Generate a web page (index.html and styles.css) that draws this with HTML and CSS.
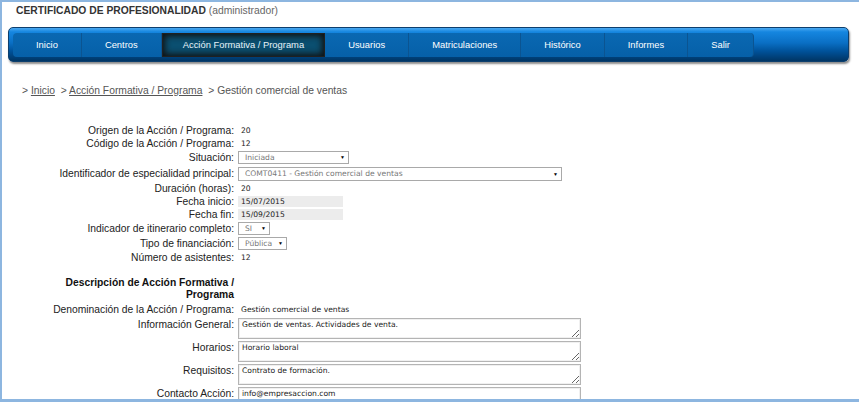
FILE: index.html
```html
<!DOCTYPE html>
<html lang="es">

<head>
  <meta charset="UTF-8" />
  <meta name="viewport" content="width=device-width, initial-scale=1.0" />
  <title>Certificado de profesionalidad</title>
  <link rel="stylesheet" href="styles.css">
</head>

<body>
  <div class="frame">
    <div class="header">
      <strong>CERTIFICADO DE PROFESIONALIDAD</strong> (administrador)
    </div>

    <div class="menu">
      <ul class="menu-items">
        <li><a href="javascript:;">Inicio</a></li>
        <li><a href="javascript:;">Centros</a></li>
        <li><a href="javascript:;" class="active">Acción Formativa / Programa</a></li>
        <li><a href="javascript:;">Usuarios</a></li>
        <li><a href="javascript:;">Matriculaciones</a></li>
        <li><a href="javascript:;">Histórico</a></li>
        <li><a href="javascript:;">Informes</a></li>
        <li><a href="javascript:;" class="last">Salir</a></li>
      </ul>
    </div>

    <div class="breadcrumb">
      &gt; <a href="javascript:;">Inicio</a> &gt; <a href="javascript:;">Acción Formativa / Programa</a> &gt; Gestión comercial de ventas
    </div>

    <form class="form">
      <div class="row">
        <label class="label">Origen de la Acción / Programa:</label>
        <span class="value">20</span>
      </div>
      <div class="row">
        <label class="label">Código de la Acción / Programa:</label>
        <span class="value">12</span>
      </div>
      <div class="row">
        <label class="label">Situación:</label>
        <span class="select select-md">
          <select><option>Iniciada</option></select>
        </span>
      </div>
      <div class="row">
        <label class="label">Identificador de especialidad principal:</label>
        <span class="select select-lg">
          <select><option>COMT0411 - Gestión comercial de ventas</option></select>
        </span>
      </div>
      <div class="row">
        <label class="label">Duración (horas):</label>
        <span class="value">20</span>
      </div>
      <div class="row">
        <label class="label">Fecha inicio:</label>
        <input class="date" type="text" value="15/07/2015" readonly>
      </div>
      <div class="row">
        <label class="label">Fecha fin:</label>
        <input class="date" type="text" value="15/09/2015" readonly>
      </div>
      <div class="row">
        <label class="label">Indicador de itinerario completo:</label>
        <span class="select select-xs">
          <select><option>SI</option></select>
        </span>
      </div>
      <div class="row">
        <label class="label">Tipo de financiación:</label>
        <span class="select select-sm">
          <select><option>Pública</option></select>
        </span>
      </div>
      <div class="row">
        <label class="label">Número de asistentes:</label>
        <span class="value">12</span>
      </div>

      <div class="section-title">Descripción de Acción Formativa / Programa</div>

      <div class="row">
        <label class="label">Denominación de la Acción / Programa:</label>
        <span class="value">Gestión comercial de ventas</span>
      </div>
      <div class="row row-top">
        <label class="label">Información General:</label>
        <textarea>Gestión de ventas. Actividades de venta.</textarea>
      </div>
      <div class="row row-top">
        <label class="label">Horarios:</label>
        <textarea>Horario laboral</textarea>
      </div>
      <div class="row row-top">
        <label class="label">Requisitos:</label>
        <textarea>Contrato de formación.</textarea>
      </div>
      <div class="row row-top">
        <label class="label">Contacto Acción:</label>
        <input class="text" type="text" value="info@empresaccion.com">
      </div>
    </form>
  </div>
</body>

</html>
```

FILE: styles.css
```css
* {
  padding: 0;
  margin: 0;
  box-sizing: border-box;
}

body {
  background: #fff;
  font-family: "Liberation Sans", Arial, sans-serif;
  color: #222;
}

.frame {
  height: 402px;
  overflow: hidden;
  border: 2px solid #8db6e0;
  border-right: 0;
  border-bottom-width: 3px;
}

.header {
  padding: 2px 0 0 14px;
  font-size: 10.3px;
  line-height: 13px;
  color: #666;
}

.header strong {
  color: #333;
}

/* menu */
.menu {
  margin: 10px 0 0 6px;
  width: 841px;
  height: 35px;
  padding: 5px 0 0 4px;
  border: 1px solid #0d3f6e;
  border-radius: 5px;
  background: linear-gradient(#4aa8f0, #1586e0 12%, #0a6fc4 45%, #00529a 70%, #003564);
  box-shadow: 1px 2px 2px rgba(0, 0, 0, 0.45);
}

.menu-items {
  display: flex;
  list-style: none;
  height: 24px;
}

.menu-items a {
  display: block;
  height: 24px;
  line-height: 24px;
  padding: 0 23px;
  background: linear-gradient(#0a68b2, #0660a8);
  border-right: 1px solid #0b5491;
  color: #fff;
  font-size: 9.4px;
  text-decoration: none;
}

.menu-items li:first-child a {
  border-radius: 4px 0 0 4px;
}

.menu-items a.last {
  border-radius: 0 4px 4px 0;
  padding: 0 23px;
}

.menu-items a.active {
  padding: 0 20px;
  background: #0b4f70;
  border: 1px solid #202020;
  box-shadow: inset 0 0 6px 2px #101010;
  line-height: 22px;
  color: #e8f2f8;
}

/* breadcrumb */
.breadcrumb {
  margin-top: 22px;
  padding-left: 20px;
  font-size: 10.3px;
  line-height: 13px;
  color: #555;
}

.breadcrumb a {
  margin-right: 3px;
  color: #555;
}

/* form */
.form {
  margin-top: 27px;
  padding-left: 32px;
}

.row {
  display: grid;
  grid-template-columns: 200px 1fr;
  column-gap: 4px;
  align-items: center;
}

.row-top {
  align-items: start;
  margin-top: 2px;
}

.label {
  text-align: right;
  font-size: 10.3px;
  line-height: 13px;
  color: #222;
}

.value {
  padding-left: 3px;
  font-family: "DejaVu Sans", Verdana, sans-serif;
  font-size: 7.6px;
  line-height: 13px;
  color: #222;
}

.select {
  position: relative;
  display: inline-block;
  justify-self: start;
  margin: 1px 0;
}

.select select {
  display: block;
  width: 100%;
  height: 13px;
  padding: 0 0 0 6px;
  appearance: none;
  -webkit-appearance: none;
  border: 1px solid #a9a9a9;
  border-radius: 0;
  background: #fff;
  font-family: "DejaVu Sans", Verdana, sans-serif;
  font-size: 7.6px;
  color: #777;
}

.select::after {
  content: "▼";
  position: absolute;
  right: 4px;
  top: 3px;
  font-size: 5px;
  line-height: 6px;
  color: #000;
}

.select-md {
  width: 111px;
}

.select-lg {
  width: 324px;
  margin: 1.5px 0;
}

.select-lg select {
  height: 14px;
}

.select-lg::after {
  top: 4px;
}

.select-xs {
  width: 32px;
}

.select-sm {
  width: 49px;
}

.date {
  justify-self: start;
  width: 105px;
  height: 11px;
  padding-left: 3px;
  border: 0;
  background: #ececec;
  font-family: "DejaVu Sans", Verdana, sans-serif;
  font-size: 7.6px;
  color: #222;
  outline: none;
}

.section-title {
  width: 200px;
  margin: 13px 0 2px;
  text-align: right;
  font-size: 10.3px;
  font-weight: bold;
  line-height: 12px;
  color: #111;
}

textarea,
.text {
  width: 343px;
  border: 1px solid #b4b4b4;
  box-shadow: inset 0 0 0 1px #f0f0f0;
  padding: 1px 3px;
  font-family: "DejaVu Sans", Verdana, sans-serif;
  font-size: 7.6px;
  line-height: 9px;
  color: #222;
  outline: none;
}

textarea {
  display: block;
  height: 21px;
  resize: vertical;
  overflow: hidden;
}

.text {
  height: 20px;
  padding-top: 0;
  padding-bottom: 8px;
}
```
